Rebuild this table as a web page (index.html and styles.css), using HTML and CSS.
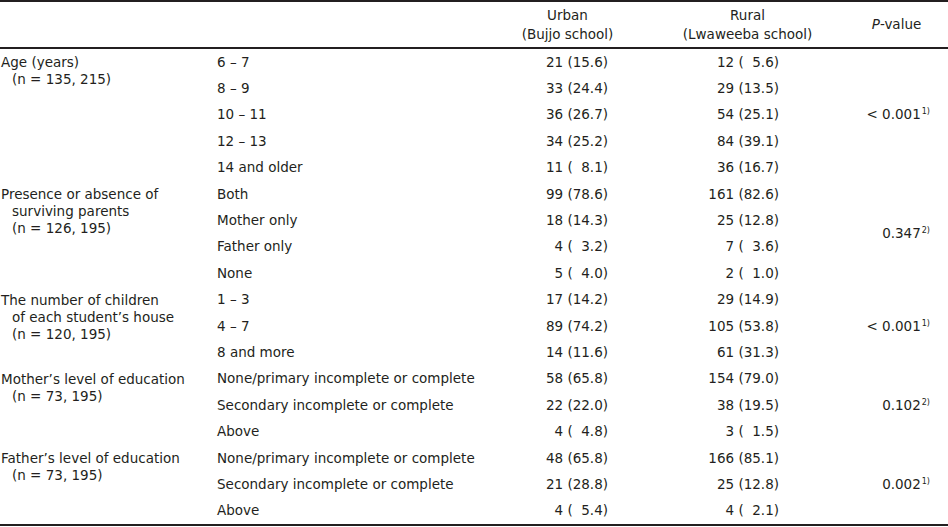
FILE: index.html
```html
<!DOCTYPE html>
<html lang="en">
<head>
<meta charset="utf-8">
<title>Characteristics of students</title>
<link rel="stylesheet" href="styles.css">
</head>
<body>
<table class="stats">
  <colgroup>
    <col class="c-var">
    <col class="c-cat">
    <col class="c-urban">
    <col class="c-rural">
    <col class="c-p">
  </colgroup>
  <thead>
    <tr>
      <th></th>
      <th></th>
      <th class="h-group">Urban<br>(Bujjo school)</th>
      <th class="h-group">Rural<br>(Lwaweeba school)</th>
      <th class="h-p"><i>P</i>-value</th>
    </tr>
  </thead>
  <tbody>
    <tr>
      <td class="var" rowspan="5"><div class="label">Age (years)<br>(n = 135, 215)</div></td>
      <td class="cat">6 – 7</td>
      <td class="num urban">21 (15.6)</td>
      <td class="num rural">12 (&#8199;5.6)</td>
      <td class="pval" rowspan="5">&lt; 0.001<sup>1)</sup></td>
    </tr>
    <tr><td class="cat">8 – 9</td><td class="num urban">33 (24.4)</td><td class="num rural">29 (13.5)</td></tr>
    <tr><td class="cat">10 – 11</td><td class="num urban">36 (26.7)</td><td class="num rural">54 (25.1)</td></tr>
    <tr><td class="cat">12 – 13</td><td class="num urban">34 (25.2)</td><td class="num rural">84 (39.1)</td></tr>
    <tr><td class="cat">14 and older</td><td class="num urban">11 (&#8199;8.1)</td><td class="num rural">36 (16.7)</td></tr>

    <tr>
      <td class="var" rowspan="4"><div class="label">Presence or absence of<br>surviving parents<br>(n = 126, 195)</div></td>
      <td class="cat">Both</td>
      <td class="num urban">99 (78.6)</td>
      <td class="num rural">161 (82.6)</td>
      <td class="pval" rowspan="4">0.347<sup>2)</sup></td>
    </tr>
    <tr><td class="cat">Mother only</td><td class="num urban">18 (14.3)</td><td class="num rural">25 (12.8)</td></tr>
    <tr><td class="cat">Father only</td><td class="num urban">4 (&#8199;3.2)</td><td class="num rural">7 (&#8199;3.6)</td></tr>
    <tr><td class="cat">None</td><td class="num urban">5 (&#8199;4.0)</td><td class="num rural">2 (&#8199;1.0)</td></tr>

    <tr>
      <td class="var" rowspan="3"><div class="label">The number of children<br>of each student’s house<br>(n = 120, 195)</div></td>
      <td class="cat">1 – 3</td>
      <td class="num urban">17 (14.2)</td>
      <td class="num rural">29 (14.9)</td>
      <td class="pval" rowspan="3">&lt; 0.001<sup>1)</sup></td>
    </tr>
    <tr><td class="cat">4 – 7</td><td class="num urban">89 (74.2)</td><td class="num rural">105 (53.8)</td></tr>
    <tr><td class="cat">8 and more</td><td class="num urban">14 (11.6)</td><td class="num rural">61 (31.3)</td></tr>

    <tr>
      <td class="var" rowspan="3"><div class="label">Mother’s level of education<br>(n = 73, 195)</div></td>
      <td class="cat">None/primary incomplete or complete</td>
      <td class="num urban">58 (65.8)</td>
      <td class="num rural">154 (79.0)</td>
      <td class="pval" rowspan="3">0.102<sup>2)</sup></td>
    </tr>
    <tr><td class="cat">Secondary incomplete or complete</td><td class="num urban">22 (22.0)</td><td class="num rural">38 (19.5)</td></tr>
    <tr><td class="cat">Above</td><td class="num urban">4 (&#8199;4.8)</td><td class="num rural">3 (&#8199;1.5)</td></tr>

    <tr>
      <td class="var" rowspan="3"><div class="label">Father’s level of education<br>(n = 73, 195)</div></td>
      <td class="cat">None/primary incomplete or complete</td>
      <td class="num urban">48 (65.8)</td>
      <td class="num rural">166 (85.1)</td>
      <td class="pval" rowspan="3">0.002<sup>1)</sup></td>
    </tr>
    <tr><td class="cat">Secondary incomplete or complete</td><td class="num urban">21 (28.8)</td><td class="num rural">25 (12.8)</td></tr>
    <tr><td class="cat">Above</td><td class="num urban">4 (&#8199;5.4)</td><td class="num rural">4 (&#8199;2.1)</td></tr>
  </tbody>
</table>
</body>
</html>
```

FILE: styles.css
```css
html, body {
  margin: 0;
  padding: 0;
  background: #ffffff;
}

body {
  font-family: "DejaVu Sans", "Liberation Sans", sans-serif;
  font-size: 13.5px;
  color: #231f20;
}

.stats {
  width: 948px;
  border-collapse: collapse;
  table-layout: fixed;
  border-top: 2px solid #231f20;
  border-bottom: 2px solid #231f20;
}

.c-var { width: 217px; }
.c-cat { width: 268px; }
.c-urban { width: 165px; }
.c-rural { width: 195px; }
.c-p { width: 103px; }

.stats th {
  height: 45px;
  padding: 0;
  font-weight: normal;
  line-height: 19px;
  border-bottom: 2px solid #231f20;
  vertical-align: middle;
}

.h-group { text-align: center; }
.h-p { text-align: center; }

.stats td {
  height: 26.4px;
  padding: 0;
  line-height: 17px;
  vertical-align: middle;
  white-space: nowrap;
}

.stats td.var {
  vertical-align: top;
  padding-top: 5px;
  padding-left: 1px;
}

.label {
  padding-left: 11px;
  text-indent: -11px;
}

.cat { padding-left: 2px; }

.num {
  text-align: right;
  font-variant-numeric: tabular-nums;
}

.stats td.urban { padding-right: 42px; }
.stats td.rural { padding-right: 66px; }

.stats td.pval {
  text-align: right;
  padding-right: 18px;
  vertical-align: middle;
}

.pval sup {
  font-size: 8px;
  line-height: 0;
  vertical-align: 5px;
  margin-left: 1px;
}
```
